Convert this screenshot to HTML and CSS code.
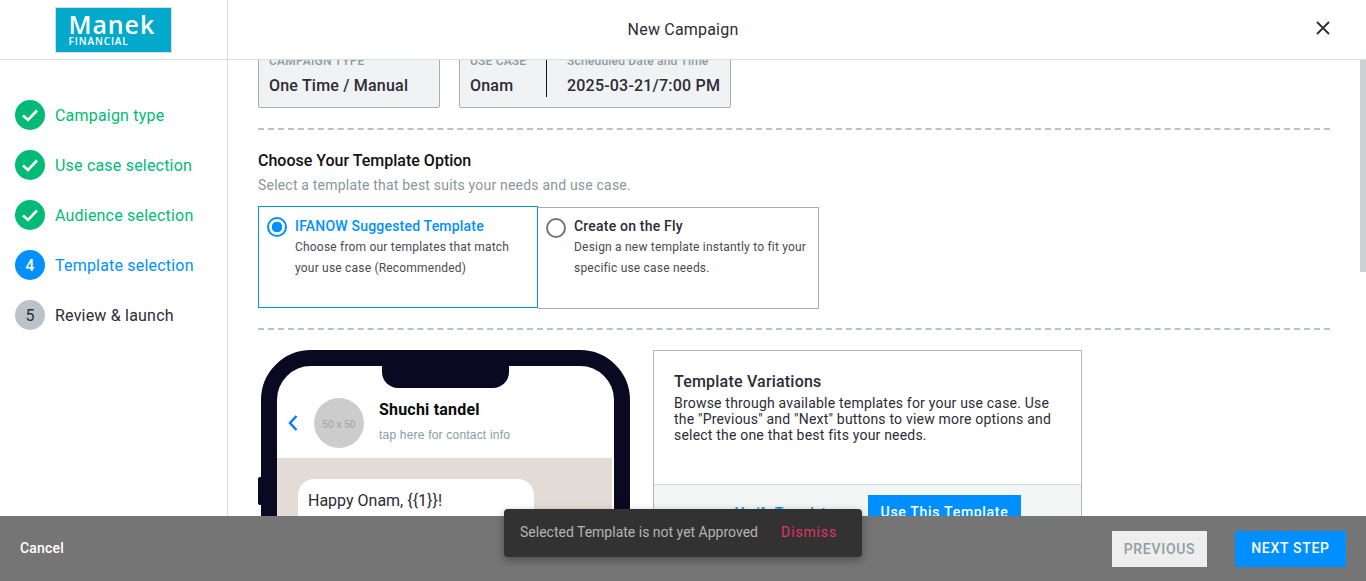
FILE: index.html
```html
<!DOCTYPE html>
<html lang="en">

<head>
    <meta charset="UTF-8">
    <meta name="viewport" content="width=device-width, initial-scale=1.0">
    <title>New Campaign</title>
    <link rel="stylesheet" href="styles.css">
</head>

<body>
    <div class="page">
        <header class="topbar">
            <div class="logo-cell">
                <div class="logo">
                    <span class="logo-name">Manek</span>
                    <span class="logo-sub">FINANCIAL</span>
                </div>
            </div>
            <div class="topbar-title">New Campaign</div>
            <svg class="close-icon" width="16" height="16" viewBox="0 0 16 16">
                <path d="M2 2L14 14M14 2L2 14" stroke="#2c2c36" stroke-width="1.8" fill="none" />
            </svg>
        </header>

        <div class="middle">
            <nav class="sidebar">
                <div class="step done">
                    <span class="step-dot"><svg width="20" height="20" viewBox="0 0 20 20"><path d="M3 10.5L8 15L17 5.5" stroke="#fff" stroke-width="2.6" fill="none" /></svg></span>
                    Campaign type
                </div>
                <div class="step done">
                    <span class="step-dot"><svg width="20" height="20" viewBox="0 0 20 20"><path d="M3 10.5L8 15L17 5.5" stroke="#fff" stroke-width="2.6" fill="none" /></svg></span>
                    Use case selection
                </div>
                <div class="step done">
                    <span class="step-dot"><svg width="20" height="20" viewBox="0 0 20 20"><path d="M3 10.5L8 15L17 5.5" stroke="#fff" stroke-width="2.6" fill="none" /></svg></span>
                    Audience selection
                </div>
                <div class="step current">
                    <span class="step-dot">4</span>
                    Template selection
                </div>
                <div class="step">
                    <span class="step-dot">5</span>
                    Review &amp; launch
                </div>
            </nav>

            <main class="content">
                <div class="summary">
                    <div class="summary-card">
                        <div class="summary-item type-item">
                            <div class="summary-label">CAMPAIGN TYPE</div>
                            <div class="summary-value">One Time / Manual</div>
                        </div>
                    </div>
                    <div class="summary-card">
                        <div class="summary-item case-item">
                            <div class="summary-label">USE CASE</div>
                            <div class="summary-value">Onam</div>
                        </div>
                        <div class="summary-item date-item">
                            <div class="summary-label">Scheduled Date and Time</div>
                            <div class="summary-value">2025-03-21/7:00 PM</div>
                        </div>
                    </div>
                </div>

                <hr class="dashed first-dash">

                <h2 class="section-title">Choose Your Template Option</h2>
                <p class="section-sub">Select a template that best suits your needs and use case.</p>

                <div class="options">
                    <div class="option selected">
                        <span class="radio"></span>
                        <div>
                            <div class="option-title">IFANOW Suggested Template</div>
                            <div class="option-text">Choose from our templates that match<br>your use case (Recommended)</div>
                        </div>
                    </div>
                    <div class="option">
                        <span class="radio"></span>
                        <div>
                            <div class="option-title">Create on the Fly</div>
                            <div class="option-text">Design a new template instantly to fit your<br>specific use case needs.</div>
                        </div>
                    </div>
                </div>

                <hr class="dashed second-dash">

                <div class="preview">
                    <div class="phone-wrap">
                        <span class="phone-button"></span>
                        <div class="phone">
                            <span class="notch"></span>
                            <div class="chat-head">
                                <svg class="back-icon" width="12" height="18" viewBox="0 0 12 18">
                                    <path d="M9.5 2L3 9L9.5 16" stroke="#007aff" stroke-width="2.4" fill="none" />
                                </svg>
                                <div class="avatar">50 x 50</div>
                                <div class="chat-person">
                                    <div class="chat-name">Shuchi tandel</div>
                                    <div class="chat-info">tap here for contact info</div>
                                </div>
                            </div>
                            <div class="chat-body">
                                <div class="bubble">Happy Onam, {{1}}!</div>
                            </div>
                        </div>
                    </div>

                    <div class="variations">
                        <div class="variations-body">
                            <h3 class="variations-title">Template Variations</h3>
                            <p class="variations-text">Browse through available templates for your use case. Use the "Previous" and "Next" buttons to view more options and select the one that best fits your needs.</p>
                        </div>
                        <div class="variations-foot">
                            <a class="verify-link">Verify Template</a>
                            <button class="use-btn">Use This Template</button>
                        </div>
                    </div>
                </div>
            </main>
        </div>

        <footer class="footer">
            <span class="cancel">Cancel</span>
            <div class="footer-actions">
                <button class="prev-btn">PREVIOUS</button>
                <button class="next-btn">NEXT STEP</button>
            </div>
        </footer>

        <div class="scrollbar"></div>

        <div class="toast">
            <span class="toast-text">Selected Template is not yet Approved</span>
            <span class="toast-action">Dismiss</span>
        </div>
    </div>
</body>

</html>
```

FILE: styles.css
```css
* {
    box-sizing: border-box;
}

html,
body {
    margin: 0;
    height: 100%;
    overflow: hidden;
}

body {
    font-family: Roboto, "Liberation Sans", Arial, sans-serif;
    color: #2c2c36;
    background-color: #fff;
}

.page {
    position: relative;
    display: flex;
    flex-direction: column;
    height: 581px;
}

/* top bar */
.topbar {
    position: relative;
    display: flex;
    height: 60px;
    flex-shrink: 0;
    border-bottom: 1px solid #dcdcdc;
}

.logo-cell {
    display: flex;
    align-items: center;
    justify-content: center;
    width: 228px;
    padding-right: 1px;
    padding-top: 1px;
    border-right: 1px solid #dcdcdc;
}

.logo {
    display: flex;
    flex-direction: column;
    width: 117px;
    height: 46px;
    padding: 4px 0 0 13px;
    color: #fff;
    background-color: #02a9cb;
    border: 1px solid #dcdcdc;
}

.logo-name {
    font-family: "Open Sans", sans-serif;
    font-size: 25px;
    font-weight: 600;
    line-height: 24px;
    letter-spacing: 0.9px;
}

.logo-sub {
    font-family: "Open Sans", sans-serif;
    font-size: 10px;
    font-weight: 600;
    line-height: 10px;
    letter-spacing: 0.9px;
}

.topbar-title {
    flex: 1;
    padding-top: 20px;
    padding-right: 228px;
    font-size: 16px;
    line-height: 19px;
    text-align: center;
    letter-spacing: 0.2px;
}

.close-icon {
    position: absolute;
    top: 20px;
    right: 35px;
}

/* sidebar + scrolled content */
.middle {
    display: flex;
    flex: 1;
    min-height: 0;
}

.sidebar {
    width: 228px;
    flex-shrink: 0;
    padding: 40px 0 0 15px;
    border-right: 1px solid #dcdcdc;
}

.step {
    display: flex;
    align-items: center;
    gap: 10px;
    height: 30px;
    margin-bottom: 20px;
    font-size: 16px;
    letter-spacing: 0.2px;
}

.step-dot {
    display: flex;
    align-items: center;
    justify-content: center;
    width: 30px;
    height: 30px;
    font-size: 16px;
    border-radius: 50%;
    background-color: #bcc3c8;
}

.step.done {
    color: #00bb77;
}

.step.done .step-dot {
    background-color: #00bb77;
}

.step.current {
    color: #0090ff;
}

.step.current .step-dot {
    font-weight: 500;
    color: #fff;
    background-color: #0090ff;
}

.content {
    flex: 1;
    min-width: 0;
    overflow: hidden;
    padding: 0 36px 0 30px;
}

.summary {
    display: flex;
    gap: 19px;
    margin-top: -16px;
}

.summary-card {
    display: flex;
    height: 64px;
    background-color: #f1f2f4;
    border: 1px solid #aaadb0;
    border-radius: 2px;
}

.summary-item {
    padding: 9px 10px 0;
}

.type-item {
    width: 180px;
}

.case-item {
    width: 87px;
    height: 52px;
    border-right: 1px solid #111;
}

.date-item {
    width: 183px;
    padding-left: 20px;
}

.summary-label {
    font-size: 12px;
    line-height: 14px;
    font-weight: 500;
    letter-spacing: 0.2px;
    color: #8a9ba3;
    white-space: nowrap;
}

.summary-value {
    margin-top: 8px;
    font-size: 16px;
    line-height: 19px;
    font-weight: 500;
    letter-spacing: 0.2px;
    white-space: nowrap;
}

.dashed {
    margin: 0;
    height: 0;
    border: 0;
    border-top: 2px dashed #bcc1c4;
}

.first-dash {
    margin-top: 20px;
}

.second-dash {
    margin-top: 19px;
}

.section-title {
    margin: 21px 0 0;
    font-size: 16px;
    line-height: 19px;
    font-weight: 500;
    color: #111;
}

.section-sub {
    margin: 6px 0 0;
    font-size: 14px;
    line-height: 19px;
    letter-spacing: 0.2px;
    color: #89969c;
}

.options {
    display: flex;
    align-items: flex-start;
    margin-top: 11px;
}

.option {
    display: flex;
    gap: 8px;
    width: 281px;
    height: 102px;
    margin-top: 1px;
    padding: 8px;
    border: 1px solid #aaadb0;
    border-left: 0;
}

.option.selected {
    width: 280px;
    margin-top: 0;
    padding-top: 9px;
    border: 1px solid #0a8fe8;
}

.radio {
    width: 20px;
    height: 20px;
    margin-top: 2px;
    flex-shrink: 0;
    border: 2px solid #757575;
    border-radius: 50%;
}

.selected .radio {
    margin-top: 1px;
    border-color: #0090ff;
    background: radial-gradient(circle, #0090ff 0 5px, transparent 5.5px);
}

.option-title {
    font-size: 14px;
    line-height: 20px;
    font-weight: 500;
    letter-spacing: 0.2px;
}

.selected .option-title {
    color: #0090ff;
}

.option-text {
    margin-top: 1px;
    font-size: 12px;
    line-height: 21px;
    letter-spacing: 0.2px;
    color: #4a4a52;
}

/* phone + variations, cut off by the footer */
.preview {
    display: flex;
    align-items: flex-start;
    margin-top: 20px;
}

.phone-wrap {
    position: relative;
    width: 395px;
    flex-shrink: 0;
    padding-left: 3px;
}

.phone-button {
    position: absolute;
    top: 127px;
    left: 0;
    width: 4px;
    height: 28px;
    background-color: #0b0821;
    border-radius: 2px 0 0 2px;
}

.phone {
    position: relative;
    width: 369px;
    height: 400px;
    background-color: #fff;
    border: 16px solid #0b0821;
    border-radius: 50px;
    overflow: hidden;
}

.notch {
    position: absolute;
    top: 0;
    left: 105px;
    width: 127px;
    height: 22px;
    background-color: #0b0821;
    border-radius: 0 0 16px 16px;
}

.chat-head {
    display: flex;
    align-items: center;
    height: 92px;
    padding: 22px 0 0 10px;
}

.back-icon {
    flex-shrink: 0;
}

.avatar {
    display: flex;
    align-items: center;
    justify-content: center;
    width: 50px;
    height: 50px;
    margin-left: 15px;
    padding-top: 2px;
    font-family: "Liberation Sans", Arial, sans-serif;
    font-size: 10px;
    color: #a0a0a0;
    background-color: #cccccc;
    border-radius: 50%;
}

.chat-person {
    margin-left: 15px;
    margin-bottom: 4px;
}

.chat-name {
    font-size: 16px;
    line-height: 19px;
    font-weight: 700;
    letter-spacing: 0.2px;
    color: #0a0a0a;
}

.chat-info {
    margin-top: 9px;
    font-family: "Liberation Sans", Arial, sans-serif;
    font-size: 12px;
    line-height: 14px;
    letter-spacing: 0.2px;
    color: #8a9ba3;
}

.chat-body {
    width: 335px;
    height: 260px;
    padding: 21px 0 0 21px;
    background-color: #e3dbd5;
}

.bubble {
    width: 236px;
    height: 120px;
    padding: 12px 10px;
    font-size: 16px;
    line-height: 19px;
    background-color: #fff;
    border-radius: 16px;
}

.variations {
    width: 429px;
    flex-shrink: 0;
    border: 1px solid #b5b5b5;
}

.variations-body {
    height: 134px;
    padding: 21px 20px 0;
    border-bottom: 1px solid #d5d8da;
}

.variations-title {
    margin: 0;
    font-size: 16px;
    line-height: 19px;
    font-weight: 500;
    letter-spacing: 0.2px;
}

.variations-text {
    margin: 4px 0 0;
    font-size: 14px;
    line-height: 16px;
    letter-spacing: 0.2px;
}

.variations-foot {
    display: flex;
    align-items: flex-start;
    height: 70px;
    padding: 10px 0 0 81px;
    background-color: #f4f6f6;
}

.verify-link {
    width: 133px;
    padding-top: 10px;
    font-size: 14px;
    font-weight: 500;
    color: #0090ff;
}

.use-btn {
    width: 153px;
    height: 34px;
    padding: 0;
    font-family: inherit;
    font-size: 14px;
    font-weight: 500;
    letter-spacing: 0.7px;
    color: #fff;
    background-color: #008fff;
    border: none;
}

/* footer */
.footer {
    position: relative;
    display: flex;
    align-items: center;
    justify-content: space-between;
    height: 65px;
    flex-shrink: 0;
    padding: 0 20px;
    background-color: #757575;
}

.cancel {
    margin-bottom: 2px;
    font-size: 14px;
    font-weight: 500;
    letter-spacing: 0.2px;
    color: #fff;
}

.footer-actions {
    display: flex;
    gap: 28px;
}

.prev-btn,
.next-btn {
    height: 36px;
    padding: 0;
    font-family: inherit;
    font-size: 14px;
    font-weight: 500;
    letter-spacing: 0.7px;
    border: none;
}

.prev-btn {
    width: 95px;
    color: #8f9ea5;
    background-color: #eeeeee;
}

.next-btn {
    width: 111px;
    padding-bottom: 2px;
    color: #fff;
    background-color: #008fff;
}

.scrollbar {
    position: absolute;
    top: 60px;
    right: 0;
    width: 6px;
    height: 212px;
    background-color: #ccd1d3;
}

.toast {
    position: absolute;
    top: 509px;
    left: 504px;
    display: flex;
    align-items: center;
    justify-content: space-between;
    width: 358px;
    height: 48px;
    padding: 0 25px 2px 16px;
    font-size: 14px;
    background-color: #323232;
    border-radius: 4px;
    box-shadow: 0 3px 8px rgba(0, 0, 0, 0.35);
}

.toast-text {
    color: #b4b4b4;
}

.toast-action {
    letter-spacing: 0.85px;
    color: #e0356f;
}
```
